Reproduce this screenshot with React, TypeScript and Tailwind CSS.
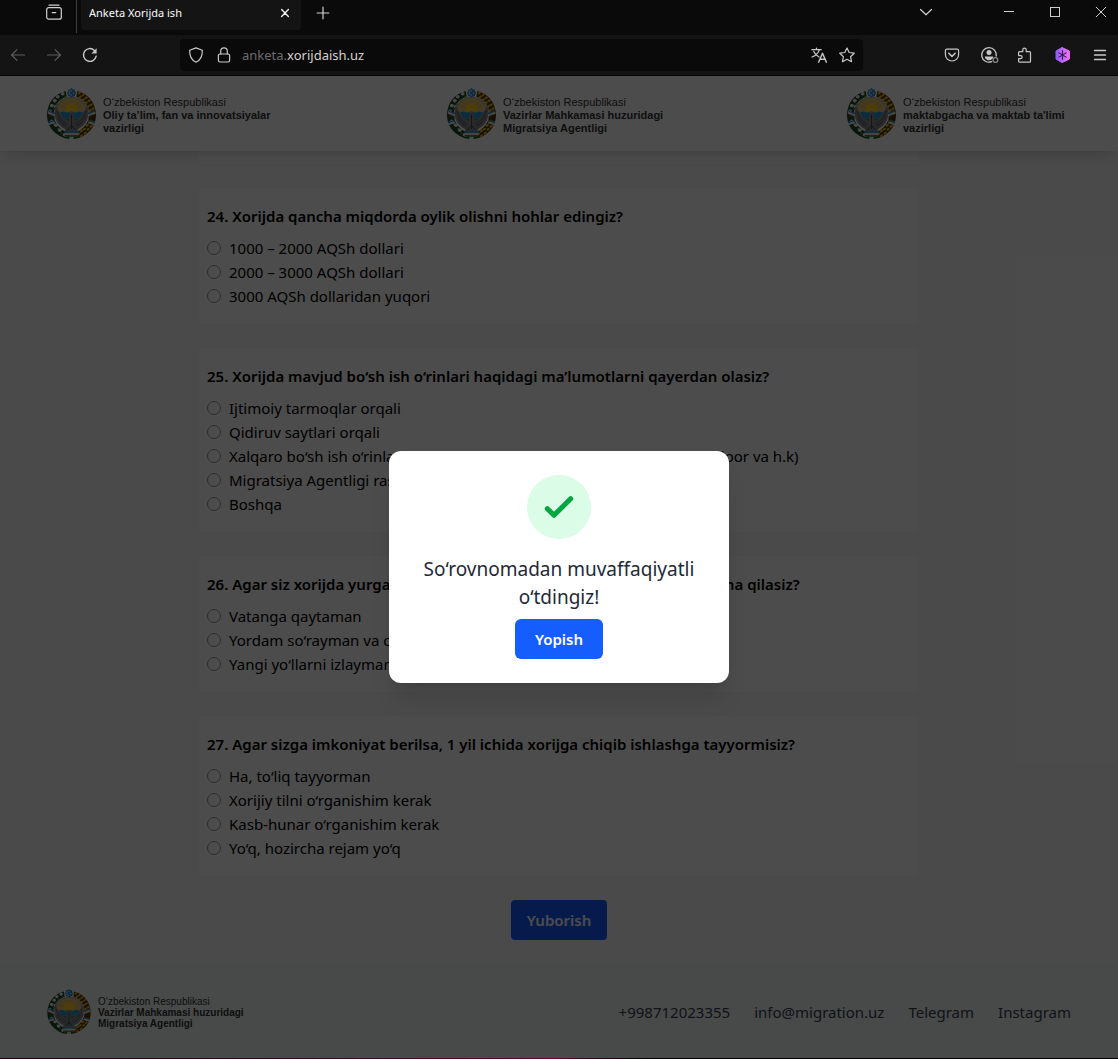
import React from "react";

type Question = { id: number; title: string; options: string[] };

const questions: Question[] = [
  {
    id: 24,
    title: "Xorijda qancha miqdorda oylik olishni hohlar edingiz?",
    options: ["1000 – 2000 AQSh dollari", "2000 – 3000 AQSh dollari", "3000 AQSh dollaridan yuqori"],
  },
  {
    id: 25,
    title: "Xorijda mavjud bo‘sh ish o‘rinlari haqidagi ma’lumotlarni qayerdan olasiz?",
    options: [
      "Ijtimoiy tarmoqlar orqali",
      "Qidiruv saytlari orqali",
      "Xalqaro bo‘sh ish o‘rinlari saytlari orqali (LinkedIn, Indeed, Xing, Glassdoor va h.k)",
      "Migratsiya Agentligi rasmiy sayti",
      "Boshqa",
    ],
  },
  {
    id: 26,
    title: "Agar siz xorijda yurganingizda ishsiz qolsangiz birinchi navbatda nima qilasiz?",
    options: ["Vatanga qaytaman", "Yordam so‘rayman va qolaman", "Yangi yo‘llarni izlayman"],
  },
  {
    id: 27,
    title: "Agar sizga imkoniyat berilsa, 1 yil ichida xorijga chiqib ishlashga tayyormisiz?",
    options: [
      "Ha, to‘liq tayyorman",
      "Xorijiy tilni o‘rganishim kerak",
      "Kasb-hunar o‘rganishim kerak",
      "Yo‘q, hozircha rejam yo‘q",
    ],
  },
];

function Icon({ children, className = "" }: { children: React.ReactNode; className?: string }) {
  return (
    <svg
      viewBox="0 0 16 16"
      className={`size-4 shrink-0 ${className}`}
      fill="none"
      stroke="currentColor"
      strokeWidth="1.2"
      strokeLinecap="round"
      strokeLinejoin="round"
      aria-hidden="true"
    >
      {children}
    </svg>
  );
}

function TitleBar() {
  return (
    <div className="flex h-[35px] items-start bg-[#0a0a0a] pr-[9px] pl-[46px] text-[#d0d0d0]">
      <button type="button" aria-label="Ko‘rish" className="mt-1">
        <Icon>
          <path d="M3 1.2h10" />
          <rect x="0.7" y="3.6" width="14.6" height="11.6" rx="2" />
          <path d="M6.2 8.6h3.6" />
        </Icon>
      </button>
      <div className="ml-3.5 h-[33px] w-px bg-[#3f3f3f]" />
      <div className="ml-1 flex h-[30px] w-55 items-center rounded-b bg-[#141414] pr-2 pb-1 pl-2">
        <span className="flex-1 truncate text-[11px] text-[#fbfbfe]">Anketa Xorijda ish</span>
        <button type="button" aria-label="Varaqni yopish">
          <Icon>
            <path d="M4.6 4.6l6.8 6.8M11.4 4.6l-6.8 6.8" strokeWidth="1.4" stroke="#f0f0f0" />
          </Icon>
        </button>
      </div>
      <button type="button" aria-label="Yangi varaq" className="mt-[5px] ml-3.5">
        <Icon>
          <path d="M8 2.2v11.6M2.2 8h11.6" />
        </Icon>
      </button>
      <div className="mt-1 ml-auto flex gap-[30px]">
        <button type="button" aria-label="Varaqlar ro‘yxati" className="mr-[37px]">
          <Icon>
            <path d="M2.5 5.5L8 10.8l5.5-5.3" />
          </Icon>
        </button>
        <button type="button" aria-label="Yig‘ish">
          <Icon>
            <path d="M3 7.5h10" strokeWidth="1" strokeLinecap="butt" />
          </Icon>
        </button>
        <button type="button" aria-label="Kattalashtirish">
          <Icon>
            <rect x="3.5" y="3.5" width="9" height="9" strokeWidth="1" strokeLinejoin="miter" />
          </Icon>
        </button>
        <button type="button" aria-label="Yopish">
          <Icon>
            <path d="M3.2 3.2l9.6 9.6M12.8 3.2l-9.6 9.6" strokeWidth="1" />
          </Icon>
        </button>
      </div>
    </div>
  );
}

function ToolBar() {
  return (
    <div className="flex h-[41px] items-center border-b border-black bg-[#141414] px-[10px] text-[#c8c8c8]">
      <div className="flex gap-5">
        <button type="button" aria-label="Orqaga" className="text-[#5c5c5c]">
          <Icon>
            <path d="M14.5 8H1.6M7 2.6L1.6 8 7 13.4" />
          </Icon>
        </button>
        <button type="button" aria-label="Oldinga" className="text-[#5c5c5c]">
          <Icon>
            <path d="M1.5 8h12.9M9 2.6L14.4 8 9 13.4" />
          </Icon>
        </button>
        <button type="button" aria-label="Yangilash">
          <Icon>
            <path d="M14.2 9.2A6.4 6.4 0 1 1 12.4 3.4" strokeWidth="1.4" />
            <path d="M14.6 1.2v5.2H9.4z" fill="currentColor" stroke="none" />
          </Icon>
        </button>
      </div>
      <div className="mr-[81px] ml-[82px] flex h-8 flex-1 items-center rounded bg-[#0a0a0a] px-2">
        <Icon>
          <path d="M8 .9l6.3 2.3c.3 5.6-1.6 9.8-6.3 12C3.3 13 1.4 8.8 1.7 3.2z" />
        </Icon>
        <Icon className="ml-3">
          <rect x="2.4" y="7" width="11.2" height="8" rx="1.4" />
          <path d="M4.7 7V4.2a3.3 3.3 0 0 1 6.6 0V7" />
        </Icon>
        <span className="ml-2.5 flex-1 truncate pt-0.5 text-[13px] text-[#d2d2d4]">
          <span className="text-[#6c6c6e]">anketa.</span>xorijdaish.uz
        </span>
        <button type="button" aria-label="Tarjima qilish">
          <Icon>
            <path d="M.8 2.6h9.4M5.5 1v1.6M8.3 2.6C7.5 6 4.6 8.6 1 10M2.8 4.4C3.8 6.8 5.8 8.8 8 10" />
            <path d="M7.6 15.2L11.5 6.2l3.9 9M9 12.3h5" strokeWidth="1.4" />
          </Icon>
        </button>
        <button type="button" aria-label="Xatcho‘p" className="ml-3">
          <Icon>
            <path d="M8 1l2.2 4.5 5 .7-3.6 3.5.9 5L8 12.3l-4.5 2.4.9-5L.8 6.2l5-.7z" />
          </Icon>
        </button>
      </div>
      <div className="flex gap-[21px]">
        <button type="button" aria-label="Pocket">
          <Icon>
            <path d="M3 2.2h10a1.6 1.6 0 0 1 1.6 1.6v3.6a6.6 6.6 0 0 1-13.2 0V3.8A1.6 1.6 0 0 1 3 2.2z" />
            <path d="M4.8 6.3L8 9.4l3.2-3.1" strokeWidth="1.5" />
          </Icon>
        </button>
        <button type="button" aria-label="Hisob">
          <Icon className="overflow-visible">
            <path d="M10.6 14.7A7.3 7.3 0 1 1 15.2 9" strokeWidth="1.3" />
            <circle cx="8" cy="5.6" r="2.5" fill="currentColor" stroke="none" />
            <path d="M3.8 9.5h8.4c0 2-1.7 3.7-4.2 3.7s-4.2-1.7-4.2-3.7z" fill="currentColor" stroke="none" />
            <circle cx="14.4" cy="13" r="2.4" stroke="#8b8b8b" />
          </Icon>
        </button>
        <button type="button" aria-label="Kengaytmalar">
          <Icon className="overflow-visible">
            <path d="M.6 8.6V5.6a1 1 0 0 1 1-1h3.2V2.8a1.7 1.7 0 0 1 3.4 0v1.8h3.3a1 1 0 0 1 1 1v8.6a1 1 0 0 1-1 1H1.6a1 1 0 0 1-1-1v-2.5h2a1.5 1.5 0 0 0 0-3.1z" />
          </Icon>
        </button>
        <button type="button" aria-label="Kengaytma">
          <svg viewBox="0 0 16 16" className="size-4" aria-hidden="true">
            <defs>
              <linearGradient id="hex" x1="0" x2="1">
                <stop offset="0" stopColor="#8f5cf7" />
                <stop offset="1" stopColor="#f472f6" />
              </linearGradient>
            </defs>
            <path d="M7 .5l-6 3.5v8l6 3.6 7.400-3.600V4z" fill="url(#hex)" stroke="url(#hex)" strokeLinejoin="round" />
            <path d="M7.5 3.2v9.6M3.5 5.6l8 4.8M11.5 5.6l-8 4.8" stroke="#35164f" strokeWidth="1.1" />
          </svg>
        </button>
        <button type="button" aria-label="Menyu">
          <Icon>
            <path d="M2.5 3.5h11M2.5 8h11M2.5 12.5h11" strokeWidth="1.3" />
          </Icon>
        </button>
      </div>
    </div>
  );
}

const grains = [
  [33, 5], [37, 7], [34, 9], [40, 10], [37, 12], [43, 13], [40, 15], [45, 17], [42, 19], [47, 21],
  [44, 23], [48, 26], [45, 35], [41, 38], [45, 39], [38, 42], [42, 42], [35, 44], [39, 46], [32, 47], [35, 49],
];

const bolls = [
  [16, 6], [11, 9], [8, 13], [5, 18], [9, 19], [3, 24], [5, 34], [9, 38], [13, 43], [18, 48],
];

function Emblem({ className }: { className: string }) {
  return (
    <svg viewBox="0 0 50 52" className={className} role="img" aria-label="O‘zbekiston gerbi">
      <path d="M19 3C7 6 0 16 0 28c0 11 8 22 23 24l-1-6C12 42 7 35 7 27S11 12 20 9z" fill="#1d4d27" />
      <path d="M31 3c12 3 19 13 19 25 0 11-8 22-23 24l1-6c10-4 15-11 15-19S39 12 30 9z" fill="#4a380c" />
      {bolls.map(([x, y]) => (
        <g key={`${x}-${y}`}>
          <circle cx={x} cy={y} r="2" fill="#f0f2ec" />
          <path d={`M${x - 2} ${y + 1}l2 2 2-2`} stroke="#1d2a10" fill="none" />
          <circle cx={x + 2} cy={y + 3} r="1" fill="#4b9a44" />
        </g>
      ))}
      {grains.map(([x, y]) => (
        <ellipse key={`${x}-${y}`} cx={x} cy={y} rx="1.9" ry="1.2" fill="#f0b41c" transform={`rotate(-35 ${x} ${y})`} />
      ))}
      <circle cx="25" cy="26" r="17" fill="#a5a6a8" />
      <circle cx="25" cy="25" r="15" fill="#e0c478" />
      <path
        d="M25 22V10.500M25 22l-5-10.500M25 22l5-10.500M25 22l-9-8M25 22l9-8M25 22l-12-4M25 22l12-4"
        stroke="#f4b11f"
        strokeWidth="1"
      />
      <circle cx="25" cy="21" r="6" fill="#ffcb26" />
      <path d="M11 26l5-2 5 1 4-1 4 1 5-1 5 2v5H11z" fill="#2a97cc" />
      <path d="M12 31h26c-2 6-7 9-13 9s-11-3-13-9z" fill="#4c8a50" />
      <path
        d="M9 17c-3 11 0 20 10 25l-2 3h16l-2-3c10-5 13-14 10-25-1 3-2 5-4 8-2 4-5 7-9 9l-1-7c0-2-1-3-2-3s-2 1-2 3l-1 7c-4-2-7-5-9-9-2-3-3-5-4-8z"
        fill="#8a8b90"
      />
      <path
        d="M10 23c2 7 6 11 11 14M11 30c2 4 5 7 9 9M40 23c-2 7-6 11-11 14M39 30c-2 4-5 7-9 9"
        stroke="#55565b"
        strokeWidth="1"
        fill="none"
      />
      <path d="M25 27v15M21 43l4-5 4 5" stroke="#45464a" fill="none" />
      <path d="M1 25l7 3M1 37l7-2M42 28l7-3M42 35l7 2" stroke="#eeeeee" strokeWidth="2" />
      <path d="M1 23l7 3M42 26l7-3M1 35l7-2M42 33l7 2" stroke="#4596d0" strokeWidth="1.5" />
      <path d="M1 27l7 3M42 30l7-3" stroke="#b03a3a" strokeWidth="1" />
      <rect x="18" y="44" width="14" height="2" fill="#4596d0" />
      <rect x="18" y="46" width="14" height="2" fill="#eeeeee" />
      <rect x="18" y="48" width="14" height="2" fill="#3c8c4c" />
      <path d="M25 0l1.5 1.5h2v2L30 5l-1.5 1.5v2h-2L25 10l-1.5-1.5h-2v-2L20 5l1.5-1.5v-2h2z" fill="#2491c8" />
      <path d="M25.5 3a2.200 2.200 0 1 0 0 4" stroke="#fff" fill="none" />
      <circle cx="27" cy="5" r=".8" fill="#fff" />
    </svg>
  );
}

function Logo({ lines, small = false }: { lines: [string, string]; small?: boolean }) {
  return (
    <a href="#" className="flex w-56 items-center gap-[7px]">
      <Emblem className={small ? "h-[45px] w-[44px]" : "h-[51px] w-[49px]"} />
      <span
        className={
          small
            ? "flex flex-col pt-px font-['Liberation_Sans',sans-serif] text-[10px] leading-[11px] text-[#333]"
            : "flex flex-col pt-[3px] font-['Liberation_Sans',sans-serif] text-[11px] leading-[13px] whitespace-nowrap text-[#333]"
        }
      >
        <span>O‘zbekiston Respublikasi</span>
        <b>{lines[0]}</b>
        <b>{lines[1]}</b>
      </span>
    </a>
  );
}

function QuestionCard({ question }: { question: Question }) {
  return (
    <fieldset className="rounded bg-white px-2 py-4">
      <legend className="float-left mb-2 w-full text-[15px] leading-6 font-semibold whitespace-nowrap">
        {question.id}. {question.title}
      </legend>
      <div className="clear-both">
        {question.options.map((option) => (
          <label key={option} className="flex h-6 items-center gap-2 whitespace-nowrap">
            <input
              type="radio"
              name={`q${question.id}`}
              className="size-3.5 shrink-0 appearance-none rounded-full border border-[#8f8f9d] bg-white"
            />
            {option}
          </label>
        ))}
      </div>
    </fieldset>
  );
}

function SuccessDialog() {
  return (
    <div className="absolute inset-0 z-10 flex items-center justify-center bg-black/70">
      <div
        role="dialog"
        aria-modal="true"
        aria-labelledby="dialog-text"
        className="flex w-[340px] flex-col items-center rounded-xl bg-white p-6 shadow-xl"
      >
        <div className="mb-4 flex size-16 items-center justify-center rounded-full bg-green-100">
          <svg
            viewBox="0 0 24 24"
            className="size-10 text-green-600"
            fill="none"
            stroke="currentColor"
            strokeWidth="3"
            strokeLinecap="round"
            strokeLinejoin="round"
            aria-hidden="true"
          >
            <path d="M5 13l4 4L19 7" />
          </svg>
        </div>
        <p id="dialog-text" className="mb-2 text-center text-[19px] leading-7 text-gray-800">
          So‘rovnomadan muvaffaqiyatli o‘tdingiz!
        </p>
        <button type="button" className="h-10 rounded-md bg-blue-600 px-5 text-[15px] font-semibold text-white">
          Yopish
        </button>
      </div>
    </div>
  );
}

export default function App() {
  return (
    <div className="flex min-h-screen flex-col bg-black font-['Noto_Sans',sans-serif]">
      <TitleBar />
      <ToolBar />
      <div className="relative flex flex-1 flex-col overflow-hidden bg-[#f9f9f9] text-[15px] leading-6 text-black">
        <header className="relative bg-white py-3 shadow-lg">
          <div className="mx-auto flex max-w-5xl justify-between">
            <Logo lines={["Oliy ta’lim, fan va innovatsiyalar", "vazirligi"]} />
            <Logo lines={["Vazirlar Mahkamasi huzuridagi", "Migratsiya Agentligi"]} />
            <Logo lines={["maktabgacha va maktab ta'limi", "vazirligi"]} />
          </div>
        </header>
        <main className="mx-auto flex w-full max-w-[720px] flex-1 flex-col gap-6 pb-6">
          <div className="h-[13px] rounded-b bg-white" />
          {questions.map((question) => (
            <QuestionCard key={question.id} question={question} />
          ))}
          <button type="submit" className="h-10 self-center rounded bg-blue-600 px-4 font-semibold text-white">
            Yuborish
          </button>
        </main>
        <footer className="bg-[#f0f6f4] py-6">
          <div className="mx-auto flex max-w-5xl items-center justify-between">
            <Logo small lines={["Vazirlar Mahkamasi huzuridagi", "Migratsiya Agentligi"]} />
            <nav className="flex gap-6 text-[#364153]">
              <a href="tel:+998712023355">+998712023355</a>
              <a href="mailto:info@migration.uz">info@migration.uz</a>
              <a href="#">Telegram</a>
              <a href="#">Instagram</a>
            </nav>
          </div>
        </footer>
        <SuccessDialog />
      </div>
      <div className="h-px bg-linear-to-r from-[#1c0210] via-[#5a0a35] to-black to-60%" />
    </div>
  );
}
